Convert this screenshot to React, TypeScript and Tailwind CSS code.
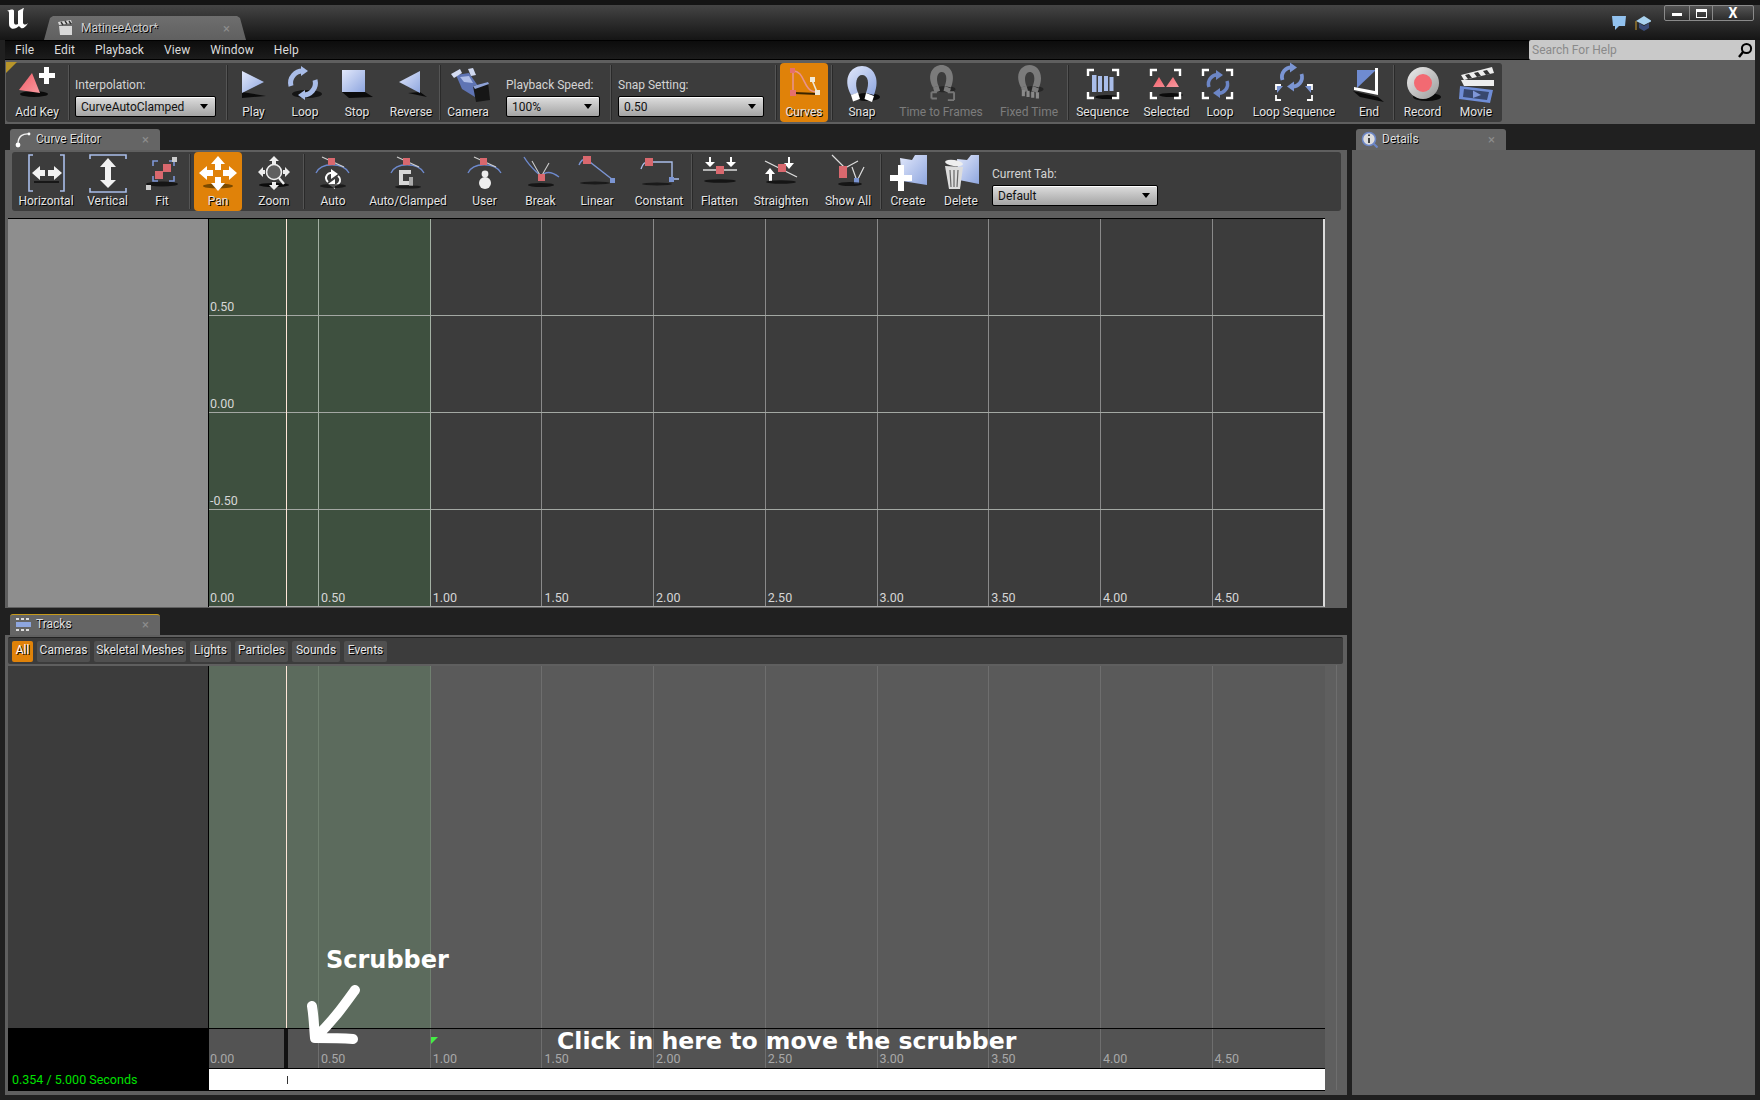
import React from "react";

const sh = "[text-shadow:1px_1px_0_#000]";
const B = "#a9bde9";
const S = "#0b0b0b";

const Corners = ({ x1, y1, x2, y2, c = "#fff", w = 2.4, l = 6 }: any) => (
  <path
    fill="none"
    stroke={c}
    strokeWidth={w}
    d={`M${x1 + l} ${y1}H${x1}V${y1 + l}M${x2 - l} ${y1}H${x2}V${y1 + l}M${x1 + l} ${y2}H${x1}V${y2 - l}M${x2 - l} ${y2}H${x2}V${y2 - l}`}
  />
);
const Loops = ({ cx, cy, r = 11, w = 4.5, c = B }: any) => (
  <g fill="none" stroke={c} strokeWidth={w}>
    <path d={`M${cx - r} ${cy + 3}A${r} ${r} 0 0 1 ${cx + 1} ${cy - r}`} />
    <path d={`M${cx + r} ${cy - 3}A${r} ${r} 0 0 1 ${cx - 1} ${cy + r}`} />
    <path d={`M${cx - 2} ${cy - r - 5}L${cx + 5} ${cy - r}L${cx - 2} ${cy - r + 5}Z`} fill={c} stroke="none" />
    <path d={`M${cx + 2} ${cy + r - 5}L${cx - 5} ${cy + r}L${cx + 2} ${cy + r + 5}Z`} fill={c} stroke="none" />
  </g>
);
const Magnet = ({ c = "url(#blue)", tip = "#fff" }: any) => (
  <g>
    <ellipse cx="25" cy="31" rx="13" ry="4" fill={S} opacity={tip === "#fff" ? 1 : 0.45} />
    <path d="M9 29C0 12 9 0 20 0C31 0 39 12 32 29L24 27C28 17 26 9 20 9C15 9 12 17 16 27Z" fill={c} />
    <path d="M9 29L16 26.5L18 33L11 35.5Z" fill={tip} />
    <path d="M32 30L24 27L22.5 33L30 36Z" fill={tip} />
  </g>
);
const KeyBox = ({ x, y, s = 6, c = "#d9686e" }: any) => <rect x={x} y={y} width={s} height={s} fill={c} />;

const icons: Record<string, React.ReactNode> = {
  addkey: (
    <g>
      <ellipse cx="17" cy="28" rx="14" ry="3" fill={S} />
      <path d="M2 24L15 7L23 27Z" fill="url(#pink)" />
      <path d="M22 7h5V1h5v6h6v5h-6v6h-5v-6h-5z" fill="#fff" />
    </g>
  ),
  play: (
    <g>
      <path d="M8 26L32 30L8 32Z" fill={S} />
      <path d="M8 5L30 16L8 27Z" fill="url(#blue)" />
    </g>
  ),
  loop: (
    <g>
      <ellipse cx="22" cy="28" rx="15" ry="4" fill={S} opacity=".8" />
      <Loops cx={18} cy={17} r={12} w={5} />
    </g>
  ),
  stop: (
    <g>
      <path d="M5 26L28 26L36 31L12 32Z" fill={S} />
      <rect x="5" y="4" width="23" height="22" fill="url(#blue)" />
    </g>
  ),
  reverse: (
    <g>
      <path d="M29 26L36 31L17 27Z" fill={S} />
      <path d="M8 16L29 5V27Z" fill="url(#blue)" />
    </g>
  ),
  camera: (
    <g>
      <path d="M8 9L21 7L30 20L27 31L14 23Z" fill="#5f74b4" />
      <path d="M12 11L21 10L25 17L16 16Z" fill="#aebde8" />
      <path d="M25 20L40 16L42 34L28 36Z" fill="#161616" />
      <path d="M25 20L40 16L41 18L27 23Z" fill="#8ea2d6" />
      <path d="M3 8L12 3L14 7L6 12Z" fill="#d4dcf2" />
      <path d="M20 3L25 2L28 9L23 10Z" fill="#cfd8ef" />
    </g>
  ),
  curves: (
    <g>
      <path d="M10 27L34 28" stroke="#3a2500" strokeWidth="2" />
      <path d="M9 5V26M9 5C22 5 18 26 33 26" stroke="#e8928c" strokeWidth="1.6" fill="none" />
      <path d="M28 14L33 26" stroke="#efe8d8" strokeWidth="1.6" />
      <KeyBox x={6} y={2} s={5} c="#e6706c" />
      <KeyBox x={6} y={24} s={6} c="#e6706c" />
      <KeyBox x={26} y={11} s={5} c="#f2ead8" />
      <KeyBox x={31} y={24} s={5} c="#f2ead8" />
    </g>
  ),
  snap: <Magnet />,
  ttf: (
    <g transform="translate(5 -1) scale(.78)">
      <Magnet c="#7b7b7b" tip="#7b7b7b" />
      <g fill="none" stroke="#777" strokeWidth="2.5">
        <path d="M7 35V43M7 35H14M14 43H7" />
        <path d="M36 35V45M36 35H28M36 45H28" />
      </g>
    </g>
  ),
  fixed: (
    <g transform="translate(5 -1) scale(.78)">
      <Magnet c="#7b7b7b" tip="#7b7b7b" />
      <g fill="#8a8a8a">
        <rect x="10" y="32" width="4" height="8" />
        <rect x="16" y="33" width="4" height="8" />
        <rect x="22" y="34" width="4" height="8" />
        <rect x="28" y="35" width="4" height="8" />
      </g>
    </g>
  ),
  sequence: (
    <g>
      <ellipse cx="24" cy="31" rx="12" ry="2" fill={S} />
      <g fill={B}>
        <rect x="9" y="9" width="4.5" height="17" />
        <rect x="15" y="10" width="4" height="16" />
        <rect x="21" y="10" width="4" height="15" />
        <rect x="26.5" y="11" width="4" height="14" />
      </g>
      <Corners x1={5} y1={4} x2={35} y2={32} />
    </g>
  ),
  selected: (
    <g>
      <ellipse cx="24" cy="29" rx="12" ry="2" fill={S} />
      <path d="M6 21L12 11L18 21ZM19 21L26 11L32 21Z" fill="url(#pink)" />
      <Corners x1={4} y1={4} x2={33} y2={32} />
    </g>
  ),
  loopsel: (
    <g>
      <Loops cx={18} cy={18} r={9} w={3.5} c="#6c86c6" />
      <Corners x1={3} y1={4} x2={32} y2={32} />
    </g>
  ),
  loopseq: (
    <g>
      <Loops cx={18} cy={11} r={9.5} w={3.8} c="#7b95d3" />
      <path d="M3 20h6l-6 7z M37 20h-6l6 7z" fill="#7b95d3" />
      <Corners x1={2} y1={19} x2={38} y2={34} l={5} w={1.8} />
    </g>
  ),
  end: (
    <g>
      <path d="M4 25L29 31L35 36L11 31Z" fill={S} />
      <path d="M8 4H27L8 22Z" fill="#6f8bd0" />
      <path d="M29 2V29L5 24V21L26 25V2Z" fill="#fff" />
    </g>
  ),
  record: (
    <g>
      <ellipse cx="24" cy="31" rx="14" ry="4" fill={S} />
      <circle cx="20" cy="17" r="16" fill="url(#gray)" />
      <circle cx="20" cy="17" r="9" fill="#f26a72" />
    </g>
  ),
  movie: (
    <g>
      <path d="M5 9L36 1L38 7L8 14Z" fill="#eee" />
      <path d="M9 9l4-1 3 4-4 1zM18 7l4-1 3 4-4 1zM27 5l4-1 3 4-4 1z" fill="#333" />
      <path d="M5 14H38V20H8Z" fill="#eee" />
      <path d="M4 20L37 24L34 37L3 33Z" fill="#6f8dd6" />
      <path d="M8 23L33 26L31 34L7 31Z" fill="#38486e" />
      <path d="M17 24.5L25 29L17 32Z" fill="#7f97d8" />
    </g>
  ),
  horizontal: (
    <g>
      <path d="M7 0H3V36H7M34 0H38V36H34" fill="none" stroke={B} strokeWidth="1.6" />
      <path d="M8 27H33" stroke={S} strokeWidth="1.5" />
      <path d="M6 18L14 11V15H19V21H14V25ZM36 18L28 11V15H22V21H28V25Z" fill="#f2f2f2" />
    </g>
  ),
  vertical: (
    <g>
      <path d="M2 4V0H38V4M2 33V37H38V33" fill="none" stroke={B} strokeWidth="1.6" />
      <path d="M20 3L28 12H23V25H28L20 33L12 25H17V12H12Z" fill="#f2f2f2" />
    </g>
  ),
  fit: (
    <g>
      <ellipse cx="20" cy="29" rx="16" ry="2.5" fill={S} opacity=".8" />
      <Corners x1={11} y1={6} x2={32} y2={26} c="#7e97d6" w={1.6} l={5} />
      <rect x="30" y="2" width="5" height="5" fill="#ccc" />
      <rect x="4" y="30" width="5" height="5" fill="#ccc" />
      <rect x="21" y="9" width="8" height="8" fill="#d9686e" />
      <rect x="13" y="16" width="8" height="8" fill="#d9686e" />
    </g>
  ),
  pan: (
    <g>
      <ellipse cx="20" cy="31" rx="15" ry="2.5" fill="#7a4a00" />
      <path d="M20 1L27 9H23V15H17V9H13Z" fill="#fff" />
      <path d="M20 36L27 28H23V22H17V28H13Z" fill="#fff" />
      <path d="M1 18L9 11V15H15V21H9V25Z" fill="#fff" />
      <path d="M39 18L31 11V15H25V21H31V25Z" fill="#fff" />
    </g>
  ),
  zoom: (
    <g>
      <ellipse cx="20" cy="30" rx="15" ry="2" fill={S} />
      <circle cx="20" cy="17" r="7.5" fill="#5f5f5f" stroke="#f0f0f0" strokeWidth="1.6" />
      <path d="M25 23L30 29" stroke="#eee" strokeWidth="2.4" />
      <path d="M20 1L25 6H22V9H18V6H15ZM20 35L25 30H22V27H18V30H15ZM4 17L9 12V15H11V19H9V22ZM36 17L31 12V15H29V19H31V22Z" fill="#eee" />
    </g>
  ),
  auto: (
    <g>
      <path d="M3 18C8 7 30 7 36 18" stroke="#6d89cc" strokeWidth="1.3" fill="none" />
      <path d="M9 2L31 12" stroke="#cfcfcf" strokeWidth="1.2" />
      <KeyBox x={15} y={3} s={7} />
      <Loops cx={20} cy={24} r={5} w={2} c="#fff" />
      <ellipse cx="20" cy="31" rx="13" ry="2" fill={S} opacity=".7" />
    </g>
  ),
  autoclamped: (
    <g>
      <path d="M3 18C8 7 30 7 36 18" stroke="#6d89cc" strokeWidth="1.3" fill="none" />
      <path d="M9 2L31 12" stroke="#cfcfcf" strokeWidth="1.2" />
      <KeyBox x={15} y={3} s={7} />
      <path d="M11 15H23V19H15V26H21V30H11Z" fill="#d6d6d6" />
      <path d="M21 22H25V31H21Z" fill="#aaa" />
      <ellipse cx="20" cy="32" rx="13" ry="1.6" fill={S} opacity=".7" />
    </g>
  ),
  user: (
    <g>
      <path d="M3 18C8 7 30 7 36 18" stroke="#6d89cc" strokeWidth="1.3" fill="none" />
      <path d="M9 2L31 12" stroke="#cfcfcf" strokeWidth="1.2" />
      <KeyBox x={15} y={3} s={7} />
      <circle cx="20" cy="19" r="3.4" fill="#eee" />
      <ellipse cx="20" cy="28" rx="6" ry="6" fill="#eee" />
    </g>
  ),
  break: (
    <g>
      <path d="M3 2C10 14 18 18 20 22C24 16 30 16 38 22" stroke="#6d89cc" strokeWidth="1.4" fill="none" />
      <path d="M11 6L20 22L28 8" stroke="#ccc" strokeWidth="1.1" fill="none" />
      <KeyBox x={17} y={19} s={7} />
      <ellipse cx="20" cy="30" rx="13" ry="2" fill={S} opacity=".8" />
    </g>
  ),
  linear: (
    <g>
      <path d="M2 10C4 5 6 4 9 4L36 25" stroke="#7b95d3" strokeWidth="1.4" fill="none" />
      <KeyBox x={6} y={1} s={8} />
      <rect x="33" y="23" width="5" height="5" fill="#7b95d3" />
      <ellipse cx="18" cy="28" rx="15" ry="1.5" fill={S} opacity=".7" />
    </g>
  ),
  constant: (
    <g>
      <path d="M2 14C4 8 6 7 9 7H33V24H40" stroke="#a9bde9" strokeWidth="1.4" fill="none" />
      <KeyBox x={6} y={3} s={8} />
      <rect x="30" y="22" width="5" height="5" fill="#7b95d3" />
      <ellipse cx="18" cy="29" rx="15" ry="1.5" fill={S} opacity=".7" />
    </g>
  ),
  flatten: (
    <g>
      <path d="M3 15H37" stroke="#ddd" strokeWidth="1.5" />
      <path d="M9 2V7H13L8 12L3 7H7V2Z M30 2V7H34L29 12L24 7H28V2Z" fill="#fff" transform="translate(2 0)" />
      <KeyBox x={16} y={11} s={8} />
      <ellipse cx="20" cy="26" rx="16" ry="1.8" fill={S} opacity=".8" />
    </g>
  ),
  straighten: (
    <g>
      <path d="M4 6L36 22" stroke="#ddd" strokeWidth="1.3" />
      <path d="M8 26V19H4L9 13L14 19H11V26Z" fill="#fff" />
      <path d="M29 2V8H33L28 14L23 8H27V2Z" fill="#fff" />
      <KeyBox x={17} y={9} s={8} />
      <ellipse cx="20" cy="27" rx="15" ry="1.8" fill={S} opacity=".8" />
    </g>
  ),
  showall: (
    <g>
      <path d="M4 0L17 13L30 6M24 12L29 26L36 12" stroke="#ddd" strokeWidth="1.2" fill="none" />
      <rect x="11" y="11" width="8" height="12" fill="#d9686e" />
      <rect x="26" y="23" width="5" height="6" fill="#7b95d3" />
      <ellipse cx="22" cy="29" rx="12" ry="2" fill={S} opacity=".8" />
    </g>
  ),
  create: (
    <g>
      <path d="M12 3L24 5L27 0H39V30L14 26Z" fill="url(#blue)" />
      <path d="M2 20H10V10H16V20H24V26H16V36H10V26H2Z" fill="#fff" />
    </g>
  ),
  del: (
    <g>
      <path d="M16 4L26 5L30 0H38V29L18 25Z" fill="url(#blue)" />
      <path d="M4 11L22 12L19 34H8Z" fill="#ddd" />
      <path d="M9 15L10 32M13 15V32M17 15L16 32" stroke="#666" strokeWidth="1.2" />
      <ellipse cx="13" cy="8" rx="9" ry="3" fill="#eee" transform="rotate(8 13 8)" />
    </g>
  ),
};

const Icon = ({ n, h = 36 }: { n: string; h?: number }) => (
  <svg width="40" height={h} viewBox={`0 0 40 ${h}`} className="overflow-visible shrink-0">
    {icons[n]}
  </svg>
);

const Btn = ({ w, n, l, on, off, mx }: { w: string; n: string; l: string; on?: boolean; off?: boolean; mx?: string }) => (
  <div className={`${w} ${mx ?? ""} shrink-0 h-full flex flex-col items-center justify-end rounded-sm pb-[2px] ${on ? "bg-[#e08209]" : ""}`}>
    <div className="flex-1 flex items-start justify-center pt-[3px]">
      <Icon n={n} />
    </div>
    <span className={`text-[12px] leading-[16px] whitespace-nowrap ${off ? "text-[#7c7c7c]" : `text-[#e4e4e4] ${sh}`}`}>{l}</span>
  </div>
);

const Sep = () => <div className="w-[2px] h-full shrink-0 py-[2px]"><div className="w-full h-full bg-[#555] border-r border-[#2a2a2a]" /></div>;

const Combo = ({ w, t }: { w: string; t: string }) => (
  <div className={`${w} h-[21px] rounded-[2px] border border-black bg-gradient-to-b from-[#dedede] to-[#a4a4a4] flex items-center justify-between pl-[5px] pr-[7px] text-[12px] text-[#111] shadow-[inset_0_1px_0_#fff]`}>
    <span>{t}</span>
    <span className="w-0 h-0 border-l-[4px] border-r-[4px] border-t-[5px] border-l-transparent border-r-transparent border-t-black" />
  </div>
);

const Field = ({ w, cw, l, t, ml }: { w: string; cw: string; l: string; t: string; ml: string }) => (
  <div className={`${w} ${ml} shrink-0 flex flex-col justify-start pt-[12px]`}>
    <span className="text-[12px] leading-[20px] text-[#d4d4d4] whitespace-nowrap mb-[1px]">{l}</span>
    <Combo w={cw} t={t} />
  </div>
);

const Close = () => <span className="text-[#8d8d8d] text-[13px] leading-none">×</span>;

const Tab = ({ w, icon, l, orange }: { w: string; icon: React.ReactNode; l: string; orange?: boolean }) => (
  <div className={`${w} h-[21px] ml-[5px] rounded-t-[3px] bg-[#656565] flex items-center pl-[5px] pr-[11px] ${orange ? "border-t border-[#c79a1a] pb-[2px]" : "pb-[1px]"}`}>
    <span className="w-[17px] h-[17px] mr-[4px] flex items-center justify-center">{icon}</span>
    <span className={`flex-1 text-[12px] text-[#dedede] ${sh}`}>{l}</span>
    <Close />
  </div>
);

const ticks = [0, 1, 2, 3, 4, 5, 6, 7, 8, 9];
const lineX = (i: number) => 109 + i * 111.7;
const labels = ["0.00", "0.50", "1.00", "1.50", "2.00", "2.50", "3.00", "3.50", "4.00", "4.50"];
const hLines = [{ y: 96, t: "0.50" }, { y: 193, t: "0.00" }, { y: 290, t: "-0.50" }];

const CurveGraph = () => (
  <div className="flex h-[389px] w-[1317px] ml-[3px] border-t border-black">
    <div className="w-[201px] shrink-0 bg-[#8e8e8e] border-r border-black" />
    <div className="relative flex-1 bg-[#3c3c3c] border-b border-[#a8a8a8] border-r-2 border-r-[#dcdcdc] overflow-hidden">
      <div className="absolute left-0 top-0 bottom-0 w-[221px] bg-[#3e503f]" />
      {ticks.slice(1).map((i) => (
        <div key={i} className={`absolute top-0 bottom-0 w-px ${i < 3 ? "bg-[#a3b0a3]" : "bg-[#8a8a8a]"}`} style={{ left: lineX(i - 1) }} />
      ))}
      {hLines.map((h) => (
        <div key={h.y} className="absolute left-0 right-0 h-px bg-[#a3a8a3]" style={{ top: h.y }}>
          <span className="absolute left-[1px] -top-[16px] text-[12.5px] leading-[15px] text-[#d6d6d6]">{h.t}</span>
        </div>
      ))}
      <div className="absolute top-0 bottom-0 left-[77px] w-px bg-[#ffe6d8]" />
      {labels.map((t, i) => (
        <span key={t} className="absolute bottom-[1px] text-[12.5px] leading-[15px] text-[#d6d6d6]" style={{ left: i === 0 ? 1 : lineX(i - 1) + 3 }}>
          {t}
        </span>
      ))}
    </div>
  </div>
);

const filters: [string, string][] = [
  ["All", "w-[21px]"],
  ["Cameras", "w-[53px]"],
  ["Skeletal Meshes", "w-[92px]"],
  ["Lights", "w-[41px]"],
  ["Particles", "w-[53px]"],
  ["Sounds", "w-[48px]"],
  ["Events", "w-[43px]"],
];

const Tracks = () => (
  <div className="flex flex-col ml-[3px] flex-1 min-h-0">
    <div className="h-[27px] mt-[2px] mr-[3px] rounded-[2px] bg-[#3c3c3c] flex items-center gap-[4px] pl-[4px] border-t border-[#222]">
      {filters.map(([t, w], i) => (
        <div key={t} className={`${w} h-[21px] pb-[2px] rounded-[2px] flex items-center justify-center text-[12px] whitespace-nowrap ${sh} ${i === 0 ? "bg-[#e08209] text-white" : "bg-[#505050] text-[#e6e6e6]"}`}>
          {t}
        </div>
      ))}
    </div>
    <div className="flex mt-[2px] h-[362px] w-[1317px]">
      <div className="w-[201px] bg-[#3c3c3c] border-r border-black" />
      <div className="relative flex-1 bg-[#5a5a5a] overflow-hidden">
        <div className="absolute left-0 top-0 bottom-0 w-[221px] bg-[#5c6b5d]" />
        {ticks.slice(1).map((i) => (
          <div key={i} className={`absolute top-0 bottom-0 w-px ${i < 3 ? "bg-[#708070]" : "bg-[#6e6e6e]"}`} style={{ left: lineX(i - 1) }} />
        ))}
        <div className="absolute top-0 bottom-0 left-[77px] w-px bg-[#ffe6d8]" />
      </div>
    </div>
    <div className="flex h-[63px] w-[1317px]">
      <div className="w-[201px] bg-black flex items-end pl-[4px] pb-[1px] text-[12.5px] leading-[18px] text-[#00e000] border-b border-black">0.354 / 5.000 Seconds</div>
      <div className="flex-1 flex flex-col">
        <div className="relative h-[40px] bg-[#535353] border-t border-black overflow-hidden">
          {ticks.slice(1).map((i) => (
            <div key={i} className="absolute top-0 bottom-0 w-px bg-[#6e6e6e]" style={{ left: lineX(i - 1) }} />
          ))}
          {labels.map((t, i) => (
            <span key={t} className="absolute bottom-[2px] text-[12.5px] leading-[15px] text-[#a8a8a8]" style={{ left: i === 0 ? 1 : lineX(i - 1) + 3 }}>
              {t}
            </span>
          ))}
          <div className="absolute top-0 bottom-0 left-[75px] w-[4px] bg-[#111]" />
          <svg width="8" height="8" className="absolute left-[222px] top-[8px]"><path d="M0 0H7L0 7Z" fill="#44ee44" /></svg>
        </div>
        <div className="relative h-[23px] bg-white border-y border-black">
          <div className="absolute left-[78px] top-[7px] w-px h-[8px] bg-[#333]" />
        </div>
      </div>
    </div>
  </div>
);

export default function App() {
  return (
    <div className="relative w-[1760px] h-[1100px] overflow-hidden bg-[#202020] font-['Roboto',sans-serif] flex flex-col">
      <svg className="absolute w-0 h-0">
        <defs>
          <linearGradient id="blue" x1="0" y1="0" x2="1" y2="1">
            <stop offset="0" stopColor="#e2e8fb" />
            <stop offset="1" stopColor="#8ea6df" />
          </linearGradient>
          <linearGradient id="pink" x1="0" y1="0" x2="1" y2="1">
            <stop offset="0" stopColor="#f25c66" />
            <stop offset="1" stopColor="#f79aa0" />
          </linearGradient>
          <linearGradient id="gray" x1="0" y1="0" x2="1" y2="1">
            <stop offset="0" stopColor="#eee" />
            <stop offset="1" stopColor="#999" />
          </linearGradient>
        </defs>
      </svg>

      {/* title bar */}
      <div className="relative h-[40px] shrink-0 flex items-end border-t-[5px] border-[#141414] bg-gradient-to-b from-[#454545] to-[#151515] pl-[44px]">
        <svg width="24" height="22" viewBox="0 0 24 22" className="absolute left-[5px] top-[3px]">
          <path d="M2 3C6 1 9 1 9 3V14C9 17 11 17 13 16V3C15 2 18 0 19 0C18 2 18 4 18 6V15C19 17 21 17 23 15C21 19 18 21 16 20C15 19 14 18 14 18C12 20 8 22 6 20C4 19 4 17 4 14V5C4 3 3 3 2 3Z" fill="#fff" />
        </svg>
        <div className="w-[202px] h-[24px] bg-gradient-to-b from-[#6e6e6e] to-[#606060] [clip-path:polygon(0_100%,6px_8%,9px_0,calc(100%-9px)_0,calc(100%-6px)_8%,100%_100%)] flex items-center pl-[13px] pr-[16px]">
          <svg width="20" height="16" viewBox="0 0 20 16" className="mr-[4px] shrink-0">
            <path d="M2 6H15V15H3ZM1 2L14 0L15 3L2 5Z" fill="#d8d8d8" />
            <path d="M4 2l2 3M8 1l2 3M12 1l2 3" stroke="#333" strokeWidth="1.4" />
          </svg>
          <span className={`flex-1 text-[12px] text-[#cfcfcf] ${sh}`}>MatineeActor*</span>
          <Close />
        </div>
        <svg width="40" height="16" viewBox="0 0 40 16" className="absolute left-[1611px] top-[10px]">
          <path d="M1 1H15L14 11H8L4 15V11H2Z" fill="#92c2ef" />
          <path d="M25 6L33 1L41 6L33 10Z" fill="#a9d2ef" />
          <path d="M28 8L33 11L38 8V13L33 16L28 13Z" fill="#3a4c78" />
          <path d="M25 6V15" stroke="#c8992a" strokeWidth="1" />
        </svg>
        <div className="absolute left-[1664px] top-0 w-[90px] h-[16px] flex border border-[#8a8a8a] rounded-[2px] bg-gradient-to-b from-[#555] to-[#2c2c2c]">
          <div className="w-[25px] flex items-center justify-center border-r border-[#8a8a8a]"><span className="w-[10px] h-[3px] bg-white mt-[2px]" /></div>
          <div className="w-[23px] flex items-center justify-center border-r border-[#8a8a8a]"><span className="w-[11px] h-[9px] border border-t-[3px] border-white" /></div>
          <div className="flex-1 flex items-center justify-center text-white text-[14px] font-bold leading-none">X</div>
        </div>
      </div>

      {/* menu bar */}
      <div className="h-[20px] shrink-0 mx-[5px] flex items-center bg-gradient-to-b from-[#0c0c0c] to-[#1c1c1c] border-y border-black">
        <div className="flex-1 flex gap-[20px] pl-[10px] text-[12px] tracking-[0.1px] text-[#dcdcdc]">
          {["File", "Edit", "Playback", "View", "Window", "Help"].map((m) => (
            <span key={m}>{m}</span>
          ))}
        </div>
        <div className="w-[226px] h-[20px] bg-[#c9c9c9] rounded-l-[2px] flex items-center justify-between pl-[3px] pr-[2px] text-[12px] text-[#8a8a8a]">
          <span>Search For Help</span>
          <svg width="16" height="16" viewBox="0 0 16 16"><circle cx="9.5" cy="6.5" r="4.6" fill="none" stroke="#000" strokeWidth="2" /><path d="M6 10L2 15" stroke="#000" strokeWidth="2.4" /></svg>
        </div>
      </div>

      {/* main toolbar */}
      <div className="h-[64px] shrink-0 mx-[5px] bg-[#5f5f5f] pt-[3px] pl-[1px]">
        <div className="relative h-[59px] w-[1496px] rounded-[3px] bg-[#3c3c3c] flex">
          <span className="absolute left-0 top-[-1px] w-0 h-0 border-t-[11px] border-r-[11px] border-t-[#b8952a] border-r-transparent" />
          <Btn w="w-[62px]" n="addkey" l="Add Key" />
          <Sep />
          <Field w="w-[156px]" cw="w-[141px]" l="Interpolation:" t="CurveAutoClamped" ml="pl-[5px]" />
          <Sep />
          <Btn w="w-[51px]" n="play" l="Play" />
          <Btn w="w-[52px]" n="loop" l="Loop" />
          <Btn w="w-[52px]" n="stop" l="Stop" />
          <Btn w="w-[56px]" n="reverse" l="Reverse" />
          <Sep />
          <Btn w="w-[54px]" n="camera" l="Camera" />
          <Field w="w-[115px]" cw="w-[94px]" l="Playback Speed:" t="100%" ml="pl-[11px]" />
          <Sep />
          <Field w="w-[163px]" cw="w-[146px]" l="Snap Setting:" t="0.50" ml="pl-[6px]" />
          <Sep />
          <Btn w="w-[48px]" mx="mx-[3px]" n="curves" l="Curves" on />
          <Sep />
          <Btn w="w-[58px]" n="snap" l="Snap" />
          <Btn w="w-[100px]" n="ttf" l="Time to Frames" off />
          <Btn w="w-[76px]" n="fixed" l="Fixed Time" off />
          <Sep />
          <Btn w="w-[67px]" n="sequence" l="Sequence" />
          <Btn w="w-[61px]" n="selected" l="Selected" />
          <Btn w="w-[46px]" n="loopsel" l="Loop" />
          <Btn w="w-[102px]" n="loopseq" l="Loop Sequence" />
          <Btn w="w-[48px]" n="end" l="End" />
          <Sep />
          <Btn w="w-[55px]" n="record" l="Record" />
          <Btn w="w-[52px]" n="movie" l="Movie" />
        </div>
      </div>

      {/* content */}
      <div className="flex-1 min-h-0 flex ml-[5px] mr-[5px] mb-[5px] gap-[5px]">
        <div className="w-[1342px] shrink-0 flex flex-col">
          <div className="pt-[5px]">
            <Tab
              w="w-[150px]"
              l="Curve Editor"
              icon={
                <svg width="17" height="17" viewBox="0 0 17 17"><path d="M3 13C3 5 8 2 15 3" fill="none" stroke="#eee" strokeWidth="1.3" /><circle cx="3" cy="14" r="2.4" fill="#fff" /><circle cx="14" cy="3" r="1.4" fill="#fff" /></svg>
              }
            />
          </div>
          <div className="h-[458px] bg-[#5f5f5f] flex flex-col">
            <div className="h-[59px] mt-[2px] ml-[7px] w-[1329px] rounded-[3px] bg-[#3c3c3c] flex">
              <Btn w="w-[68px]" n="horizontal" l="Horizontal" />
              <Btn w="w-[55px]" n="vertical" l="Vertical" />
              <Btn w="w-[54px]" n="fit" l="Fit" />
              <Sep />
              <Btn w="w-[48px]" mx="mx-[3px]" n="pan" l="Pan" on />
              <Btn w="w-[58px]" n="zoom" l="Zoom" />
              <Sep />
              <Btn w="w-[56px]" n="auto" l="Auto" />
              <Btn w="w-[94px]" n="autoclamped" l="Auto/Clamped" />
              <Btn w="w-[59px]" n="user" l="User" />
              <Btn w="w-[53px]" n="break" l="Break" />
              <Btn w="w-[60px]" n="linear" l="Linear" />
              <Btn w="w-[64px]" n="constant" l="Constant" />
              <Sep />
              <Btn w="w-[53px]" n="flatten" l="Flatten" />
              <Btn w="w-[70px]" n="straighten" l="Straighten" />
              <Btn w="w-[64px]" n="showall" l="Show All" />
              <Sep />
              <Btn w="w-[52px]" n="create" l="Create" />
              <Btn w="w-[54px]" n="del" l="Delete" />
              <Field w="w-[181px]" cw="w-[166px]" l="Current Tab:" t="Default" ml="pl-[4px]" />
            </div>
            <div className="h-[7px]" />
            <CurveGraph />
          </div>
          <div className="pt-[6px]">
            <Tab
              w="w-[150px]"
              l="Tracks"
              orange
              icon={
                <svg width="17" height="15" viewBox="0 0 17 15"><path d="M1 2H16M1 13H16" stroke="#ddd" strokeWidth="2" strokeDasharray="3 2" /><rect x="1" y="5" width="15" height="5" fill="#8ea6df" /></svg>
              }
            />
          </div>
          <div className="relative flex-1 min-h-0 bg-[#5f5f5f] flex flex-col pr-[1px]">
            <Tracks />
            <div className="absolute left-[1331px] top-[30px] bottom-[5px] w-px bg-[#6e6e6e]" />
          </div>
        </div>
        <div className="flex-1 flex flex-col">
          <div className="pt-[5px] -ml-[1px]">
            <Tab
              w="w-[150px]"
              l="Details"
              icon={
                <svg width="17" height="17" viewBox="0 0 17 17"><circle cx="8" cy="8" r="6.5" fill="#ddd" stroke="#6c86c6" strokeWidth="1.6" /><path d="M12.5 12.5L16.5 16.5" stroke="#6c86c6" strokeWidth="2.2" /><path d="M8 3.5v1.6M8 7v5" stroke="#333" strokeWidth="1.8" /></svg>
              }
            />
          </div>
          <div className="flex-1 bg-[#5f5f5f]" />
        </div>
      </div>

      {/* annotations painted on the screenshot */}
      <span className="absolute left-[326px] top-[945px] text-[24px] leading-[30px] font-bold text-white font-['DejaVu_Sans',sans-serif] whitespace-nowrap">Scrubber</span>
      <span className="absolute left-[557px] top-[1026px] text-[23.6px] leading-[30px] font-bold text-white font-['DejaVu_Sans',sans-serif] whitespace-nowrap">Click in here to move the scrubber</span>
      <svg width="70" height="70" viewBox="0 0 70 70" className="absolute left-[300px] top-[980px]">
        <path d="M55 10C42 28 32 42 15 58M12 26C14 38 14 48 15 58C26 58 40 58 53 59" fill="none" stroke="#fff" strokeWidth="10" strokeLinecap="round" strokeLinejoin="round" />
      </svg>
    </div>
  );
}
